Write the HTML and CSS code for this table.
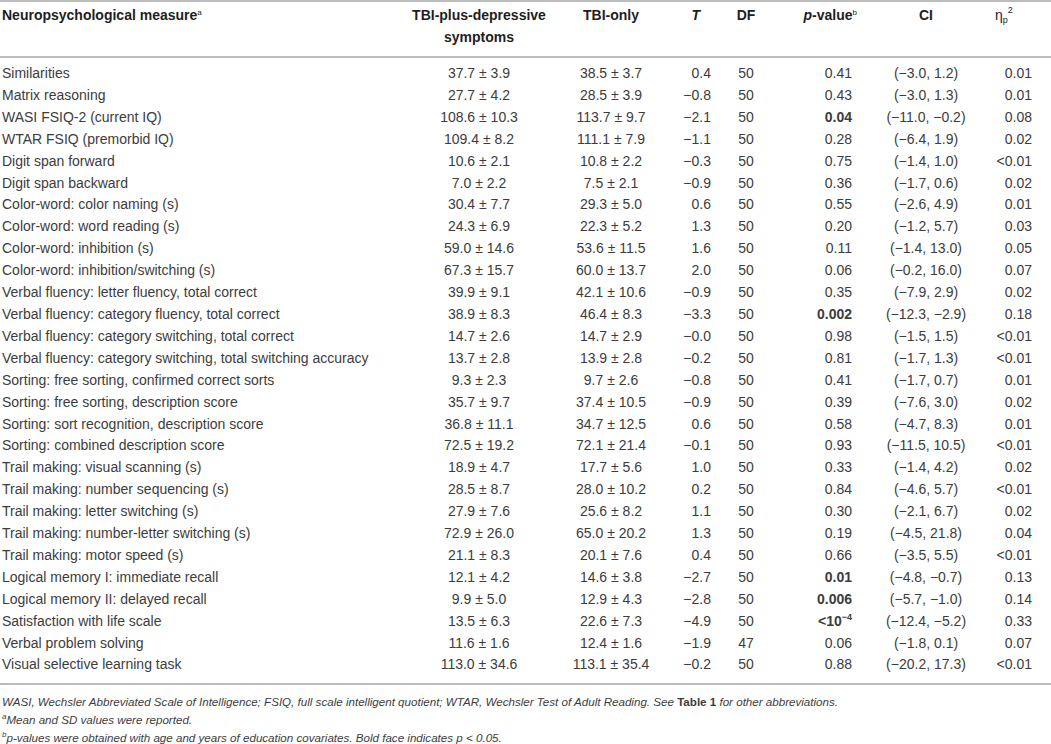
FILE: index.html
```html
<!DOCTYPE html>
<html lang="en">
<head>
<meta charset="utf-8">
<title>Neuropsychological measures</title>
<link rel="stylesheet" href="styles.css">
</head>
<body>
<div class="page">
<table class="data">
<colgroup>
<col class="c-measure"><col class="c-plus"><col class="c-only"><col class="c-t"><col class="c-df"><col class="c-p"><col class="c-ci"><col class="c-eta">
</colgroup>
<thead>
<tr>
<th class="measure">Neuropsychological measure<sup class="fn">a</sup></th>
<th class="plus">TBI-plus-depressive<br>symptoms</th>
<th class="only">TBI-only</th>
<th class="t"><i>T</i></th>
<th class="df">DF</th>
<th class="p"><i>p</i>-value<sup class="fn">b</sup></th>
<th class="ci">CI</th>
<th class="eta">η<sub>p</sub><sup>2</sup></th>
</tr>
</thead>
<tbody>
<tr><td class="measure">Similarities</td><td class="plus">37.7 ± 3.9</td><td class="only">38.5 ± 3.7</td><td class="t">0.4</td><td class="df">50</td><td class="p">0.41</td><td class="ci">(−3.0, 1.2)</td><td class="eta">0.01</td></tr>
<tr><td class="measure">Matrix reasoning</td><td class="plus">27.7 ± 4.2</td><td class="only">28.5 ± 3.9</td><td class="t">−0.8</td><td class="df">50</td><td class="p">0.43</td><td class="ci">(−3.0, 1.3)</td><td class="eta">0.01</td></tr>
<tr><td class="measure">WASI FSIQ-2 (current IQ)</td><td class="plus">108.6 ± 10.3</td><td class="only">113.7 ± 9.7</td><td class="t">−2.1</td><td class="df">50</td><td class="p"><b>0.04</b></td><td class="ci">(−11.0, −0.2)</td><td class="eta">0.08</td></tr>
<tr><td class="measure">WTAR FSIQ (premorbid IQ)</td><td class="plus">109.4 ± 8.2</td><td class="only">111.1 ± 7.9</td><td class="t">−1.1</td><td class="df">50</td><td class="p">0.28</td><td class="ci">(−6.4, 1.9)</td><td class="eta">0.02</td></tr>
<tr><td class="measure">Digit span forward</td><td class="plus">10.6 ± 2.1</td><td class="only">10.8 ± 2.2</td><td class="t">−0.3</td><td class="df">50</td><td class="p">0.75</td><td class="ci">(−1.4, 1.0)</td><td class="eta">&lt;0.01</td></tr>
<tr><td class="measure">Digit span backward</td><td class="plus">7.0 ± 2.2</td><td class="only">7.5 ± 2.1</td><td class="t">−0.9</td><td class="df">50</td><td class="p">0.36</td><td class="ci">(−1.7, 0.6)</td><td class="eta">0.02</td></tr>
<tr><td class="measure">Color-word: color naming (s)</td><td class="plus">30.4 ± 7.7</td><td class="only">29.3 ± 5.0</td><td class="t">0.6</td><td class="df">50</td><td class="p">0.55</td><td class="ci">(−2.6, 4.9)</td><td class="eta">0.01</td></tr>
<tr><td class="measure">Color-word: word reading (s)</td><td class="plus">24.3 ± 6.9</td><td class="only">22.3 ± 5.2</td><td class="t">1.3</td><td class="df">50</td><td class="p">0.20</td><td class="ci">(−1.2, 5.7)</td><td class="eta">0.03</td></tr>
<tr><td class="measure">Color-word: inhibition (s)</td><td class="plus">59.0 ± 14.6</td><td class="only">53.6 ± 11.5</td><td class="t">1.6</td><td class="df">50</td><td class="p">0.11</td><td class="ci">(−1.4, 13.0)</td><td class="eta">0.05</td></tr>
<tr><td class="measure">Color-word: inhibition/switching (s)</td><td class="plus">67.3 ± 15.7</td><td class="only">60.0 ± 13.7</td><td class="t">2.0</td><td class="df">50</td><td class="p">0.06</td><td class="ci">(−0.2, 16.0)</td><td class="eta">0.07</td></tr>
<tr><td class="measure">Verbal fluency: letter fluency, total correct</td><td class="plus">39.9 ± 9.1</td><td class="only">42.1 ± 10.6</td><td class="t">−0.9</td><td class="df">50</td><td class="p">0.35</td><td class="ci">(−7.9, 2.9)</td><td class="eta">0.02</td></tr>
<tr><td class="measure">Verbal fluency: category fluency, total correct</td><td class="plus">38.9 ± 8.3</td><td class="only">46.4 ± 8.3</td><td class="t">−3.3</td><td class="df">50</td><td class="p"><b>0.002</b></td><td class="ci">(−12.3, −2.9)</td><td class="eta">0.18</td></tr>
<tr><td class="measure">Verbal fluency: category switching, total correct</td><td class="plus">14.7 ± 2.6</td><td class="only">14.7 ± 2.9</td><td class="t">−0.0</td><td class="df">50</td><td class="p">0.98</td><td class="ci">(−1.5, 1.5)</td><td class="eta">&lt;0.01</td></tr>
<tr><td class="measure">Verbal fluency: category switching, total switching accuracy</td><td class="plus">13.7 ± 2.8</td><td class="only">13.9 ± 2.8</td><td class="t">−0.2</td><td class="df">50</td><td class="p">0.81</td><td class="ci">(−1.7, 1.3)</td><td class="eta">&lt;0.01</td></tr>
<tr><td class="measure">Sorting: free sorting, confirmed correct sorts</td><td class="plus">9.3 ± 2.3</td><td class="only">9.7 ± 2.6</td><td class="t">−0.8</td><td class="df">50</td><td class="p">0.41</td><td class="ci">(−1.7, 0.7)</td><td class="eta">0.01</td></tr>
<tr><td class="measure">Sorting: free sorting, description score</td><td class="plus">35.7 ± 9.7</td><td class="only">37.4 ± 10.5</td><td class="t">−0.9</td><td class="df">50</td><td class="p">0.39</td><td class="ci">(−7.6, 3.0)</td><td class="eta">0.02</td></tr>
<tr><td class="measure">Sorting: sort recognition, description score</td><td class="plus">36.8 ± 11.1</td><td class="only">34.7 ± 12.5</td><td class="t">0.6</td><td class="df">50</td><td class="p">0.58</td><td class="ci">(−4.7, 8.3)</td><td class="eta">0.01</td></tr>
<tr><td class="measure">Sorting: combined description score</td><td class="plus">72.5 ± 19.2</td><td class="only">72.1 ± 21.4</td><td class="t">−0.1</td><td class="df">50</td><td class="p">0.93</td><td class="ci">(−11.5, 10.5)</td><td class="eta">&lt;0.01</td></tr>
<tr><td class="measure">Trail making: visual scanning (s)</td><td class="plus">18.9 ± 4.7</td><td class="only">17.7 ± 5.6</td><td class="t">1.0</td><td class="df">50</td><td class="p">0.33</td><td class="ci">(−1.4, 4.2)</td><td class="eta">0.02</td></tr>
<tr><td class="measure">Trail making: number sequencing (s)</td><td class="plus">28.5 ± 8.7</td><td class="only">28.0 ± 10.2</td><td class="t">0.2</td><td class="df">50</td><td class="p">0.84</td><td class="ci">(−4.6, 5.7)</td><td class="eta">&lt;0.01</td></tr>
<tr><td class="measure">Trail making: letter switching (s)</td><td class="plus">27.9 ± 7.6</td><td class="only">25.6 ± 8.2</td><td class="t">1.1</td><td class="df">50</td><td class="p">0.30</td><td class="ci">(−2.1, 6.7)</td><td class="eta">0.02</td></tr>
<tr><td class="measure">Trail making: number-letter switching (s)</td><td class="plus">72.9 ± 26.0</td><td class="only">65.0 ± 20.2</td><td class="t">1.3</td><td class="df">50</td><td class="p">0.19</td><td class="ci">(−4.5, 21.8)</td><td class="eta">0.04</td></tr>
<tr><td class="measure">Trail making: motor speed (s)</td><td class="plus">21.1 ± 8.3</td><td class="only">20.1 ± 7.6</td><td class="t">0.4</td><td class="df">50</td><td class="p">0.66</td><td class="ci">(−3.5, 5.5)</td><td class="eta">&lt;0.01</td></tr>
<tr><td class="measure">Logical memory I: immediate recall</td><td class="plus">12.1 ± 4.2</td><td class="only">14.6 ± 3.8</td><td class="t">−2.7</td><td class="df">50</td><td class="p"><b>0.01</b></td><td class="ci">(−4.8, −0.7)</td><td class="eta">0.13</td></tr>
<tr><td class="measure">Logical memory II: delayed recall</td><td class="plus">9.9 ± 5.0</td><td class="only">12.9 ± 4.3</td><td class="t">−2.8</td><td class="df">50</td><td class="p"><b>0.006</b></td><td class="ci">(−5.7, −1.0)</td><td class="eta">0.14</td></tr>
<tr><td class="measure">Satisfaction with life scale</td><td class="plus">13.5 ± 6.3</td><td class="only">22.6 ± 7.3</td><td class="t">−4.9</td><td class="df">50</td><td class="p"><b>&lt;10<sup class="exp">−4</sup></b></td><td class="ci">(−12.4, −5.2)</td><td class="eta">0.33</td></tr>
<tr><td class="measure">Verbal problem solving</td><td class="plus">11.6 ± 1.6</td><td class="only">12.4 ± 1.6</td><td class="t">−1.9</td><td class="df">47</td><td class="p">0.06</td><td class="ci">(−1.8, 0.1)</td><td class="eta">0.07</td></tr>
<tr><td class="measure">Visual selective learning task</td><td class="plus">113.0 ± 34.6</td><td class="only">113.1 ± 35.4</td><td class="t">−0.2</td><td class="df">50</td><td class="p">0.88</td><td class="ci">(−20.2, 17.3)</td><td class="eta">&lt;0.01</td></tr>
</tbody>
</table>
<div class="notes">
<p>WASI, Wechsler Abbreviated Scale of Intelligence; FSIQ, full scale intelligent quotient; WTAR, Wechsler Test of Adult Reading. See <b>Table 1</b> for other abbreviations.</p>
<p><sup class="fn">a</sup>Mean and SD values were reported.</p>
<p class="last"><sup class="fn">b</sup>p-values were obtained with age and years of education covariates. Bold face indicates p &lt; 0.05.</p>
</div>
</div>
</body>
</html>
```

FILE: styles.css
```css
html, body {
  margin: 0;
  padding: 0;
  background: #ffffff;
}

body {
  font-family: "Liberation Sans", Arial, sans-serif;
  color: #3c3c3c;
  width: 1051px;
}

.page {
  width: 1051px;
}

.data {
  width: 1051px;
  border-collapse: collapse;
  table-layout: fixed;
  font-size: 14px;
}

.c-measure { width: 392px; }
.c-plus { width: 174px; }
.c-only { width: 90px; }
.c-t { width: 59px; }
.c-df { width: 62px; }
.c-p { width: 80px; }
.c-ci { width: 138px; }
.c-eta { width: 56px; }

.data thead tr {
  border-top: 2px solid #bdbdbd;
  border-bottom: 2px solid #bdbdbd;
}

.data th {
  font-weight: bold;
  color: #1e1e1e;
  line-height: 22px;
  padding: 2px 0 8px 0;
  vertical-align: top;
  white-space: nowrap;
}

.data td {
  line-height: 21.9px;
  padding: 0;
  white-space: nowrap;
  vertical-align: middle;
}

.data tbody tr:first-child td {
  padding-top: 5px;
}

.data tbody tr:last-child td {
  padding-bottom: 7px;
}

.data tbody tr:last-child {
  border-bottom: 2px solid #bdbdbd;
}

.measure { text-align: left; padding-left: 2px !important; }
.plus { text-align: center; }
.only { text-align: center; }
.t { text-align: right; padding-right: 4px !important; }
th.t { padding-right: 15px !important; }
.df { text-align: center; }
.p { text-align: right; padding-right: 5px !important; }
th.p { padding-right: 0 !important; }
.ci { text-align: center; }
.eta { text-align: right; padding-right: 19px !important; }
th.eta { padding-right: 40px !important; font-weight: normal; }

.fn {
  font-size: 8px;
  vertical-align: 5px;
  line-height: 0;
  font-weight: normal;
}

.exp {
  font-size: 9px;
  vertical-align: 6px;
  line-height: 0;
}

th.eta sub {
  font-size: 9px;
  vertical-align: -3px;
  line-height: 0;
}

th.eta sup {
  font-size: 9px;
  vertical-align: 7px;
  line-height: 0;
}

.notes {
  padding-top: 8px;
  font-size: 11.6px;
  font-style: italic;
  color: #3c3c3c;
}

.notes p {
  margin: 0;
  line-height: 18px;
  padding-left: 2px;
}

.notes p.last {
  line-height: 14px;
  margin-top: 2px;
}

.notes b {
  font-style: normal;
  font-weight: bold;
}
```
